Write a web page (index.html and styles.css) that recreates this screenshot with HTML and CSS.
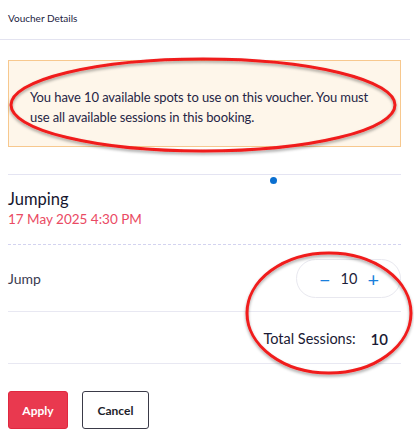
FILE: index.html
```html
<!DOCTYPE html>
<html lang="en">
<head>
  <meta charset="UTF-8">
  <title>Voucher Details</title>
  <link rel="stylesheet" href="styles.css">
</head>
<body>
  <div class="page">
    <div class="header">Voucher Details</div>

    <div class="content">
      <div class="notice">
        You have 10 available spots to use on this voucher. You must use all available sessions in this booking.
      </div>

      <div class="divider">
        <span class="dot"></span>
      </div>

      <div class="session">
        <div class="session-name">Jumping</div>
        <div class="session-date">17 May 2025 4:30 PM</div>
      </div>

      <div class="row ticket">
        <span class="ticket-name">Jump</span>
        <div class="stepper">
          <button class="step">&minus;</button>
          <span class="qty">10</span>
          <button class="step">+</button>
        </div>
      </div>

      <div class="row total">
        <span class="total-label">Total Sessions:</span>
        <span class="total-value">10</span>
      </div>

      <div class="actions">
        <button class="btn apply">Apply</button>
        <button class="btn cancel">Cancel</button>
      </div>
    </div>

    <!-- red marks drawn over the screenshot -->
    <svg class="marks" width="414" height="444" viewBox="0 0 414 444">
      <defs>
        <filter id="shade" x="-10%" y="-10%" width="120%" height="130%">
          <feDropShadow dx="0" dy="2" stdDeviation="1.5" flood-color="#000" flood-opacity="0.35"/>
        </filter>
      </defs>
      <ellipse cx="203" cy="105" rx="192" ry="46" fill="none" stroke="#f01c1c" stroke-width="3" filter="url(#shade)"/>
      <ellipse cx="329" cy="313" rx="82" ry="60" fill="none" stroke="#f01c1c" stroke-width="3" filter="url(#shade)"/>
    </svg>
  </div>
</body>
</html>
```

FILE: styles.css
```css
body {
  margin: 0;
  background: #fff;
  font-family: Lato, "Open Sans", sans-serif;
  color: #1d1d3a;
}

.page {
  position: relative;
  width: 414px;
  height: 444px;
  overflow: hidden;
}

.header {
  height: 39px;
  padding-left: 8px;
  font-size: 10px;
  line-height: 36px;
  color: #22223f;
  border-bottom: 1px solid #e3e3f0;
  margin-right: 4px;
}

.content {
  padding: 20px 13px 0 8px;
}

.notice {
  background: #fef6ea;
  border: 1px solid #f7c88e;
  padding: 26px 12px 0 21px;
  height: 59px;
  font-size: 13px;
  letter-spacing: -0.1px;
  line-height: 20px;
  color: #252545;
}

.divider {
  position: relative;
  margin-top: 27px;
  border-top: 1px solid #e4e4f2;
  height: 0;
}

.dot {
  position: absolute;
  left: 262px;
  top: 2px;
  width: 7px;
  height: 7px;
  border-radius: 50%;
  background: #0a6fd0;
}

.session {
  padding-top: 13px;
  height: 56px;
  border-bottom: 1px dashed #d3d3f0;
}

.session-name {
  font-size: 16.5px;
  line-height: 22px;
  color: #16162e;
}

.session-date {
  font-size: 13.5px;
  line-height: 19px;
  color: #ea4a63;
}

.row {
  display: flex;
  align-items: center;
  border-bottom: 1px solid #e8e8f2;
}

.ticket {
  height: 66px;
  justify-content: space-between;
}

.ticket-name {
  font-size: 14px;
  color: #3a3a50;
}

.stepper {
  display: flex;
  align-items: center;
  justify-content: space-between;
  width: 105px;
  height: 39px;
  box-sizing: border-box;
  padding: 0 21px 0 22px;
  border: 1px solid #e8e8ef;
  border-radius: 20px;
  margin-top: 1px;
}

.step {
  border: none;
  background: none;
  padding: 0;
  font-family: inherit;
  font-size: 20px;
  line-height: 1;
  color: #1a7fdc;
  cursor: pointer;
}

.qty {
  font-size: 14.5px;
  color: #1d1d3a;
}

.total {
  height: 52px;
  justify-content: flex-end;
  padding-right: 13px;
  padding-top: 2px;
  box-sizing: border-box;
}

.total-label {
  font-size: 14.5px;
  color: #1a1a34;
}

.total-value {
  margin-left: 15px;
  font-size: 15px;
  font-weight: 600;
  color: #1a1a34;
}

.actions {
  display: flex;
  gap: 14px;
  padding-top: 27px;
}

.btn {
  height: 38px;
  border-radius: 3px;
  font-family: inherit;
  font-size: 12px;
  font-weight: 700;
  cursor: pointer;
}

.apply {
  width: 60px;
  background: #e9394f;
  border: 1px solid #e0283f;
  color: #fff;
}

.cancel {
  width: 67px;
  background: #fff;
  border: 1px solid #3a3a48;
  color: #1d1d2a;
}

.marks {
  position: absolute;
  left: 0;
  top: 0;
  pointer-events: none;
}
```
